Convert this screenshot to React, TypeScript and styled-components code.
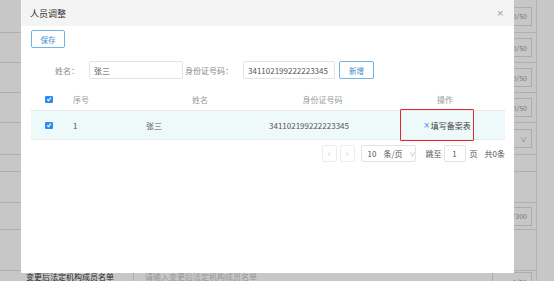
import styled, { createGlobalStyle } from 'styled-components';

const GlobalStyle = createGlobalStyle`
  html, body {
    margin: 0;
    padding: 0;
    background: #ffffff;
    font-family: 'Noto Sans CJK SC', 'Noto Sans', sans-serif;
    overflow: hidden;
  }
`;

const bgRows = [
  { h: 33, field: '0/50' },
  { h: 30, field: '0/50' },
  { h: 30, field: '0/50' },
  { h: 30, field: '0/50' },
  { h: 32, field: 'select' },
  { h: 17, field: '' },
  { h: 31, field: '' },
  { h: 27, field: '/300' },
  { h: 41, field: '' },
];

function Check() {
  return (
    <CheckBox>
      <svg width="6" height="6" viewBox="0 0 6 6">
        <path d="M1.2 3.4 L2.5 4.6 L4.8 1.6" fill="none" stroke="#fff" strokeWidth="1.1" />
      </svg>
    </CheckBox>
  );
}

export default function App() {
  return (
    <>
      <GlobalStyle />
      <Page>
        <BgForm>
          {bgRows.map((r, i) => (
            <BgRow key={i} $h={r.h}>
              {r.field === 'select' ? (
                <BgField $w={40}>
                  <span>∨</span>
                </BgField>
              ) : r.field ? (
                <BgField $w={r.field === '/300' ? 60 : 40}>
                  <span>{r.field}</span>
                </BgField>
              ) : null}
            </BgRow>
          ))}
          <BgLastRow>
            <BgLabel>变更后法定机构成员名单</BgLabel>
            <BgInput>请输入变更后法定机构成员名单</BgInput>
            <BgField $w={40}>
              <span>0/50</span>
            </BgField>
          </BgLastRow>
        </BgForm>
        <Mask />
        <Modal>
          <ModalHeader>
            <Title>人员调整</Title>
            <Close>×</Close>
          </ModalHeader>
          <ModalBody>
            <GhostButton $w={34}>保存</GhostButton>
            <SearchRow>
              <Label $w={58}>姓名：</Label>
              <TextInput $w={94}>张三</TextInput>
              <Label $w={60}>身份证号码：</Label>
              <TextInput $w={92}>341102199222223345</TextInput>
              <GhostButton $w={35}>新增</GhostButton>
            </SearchRow>
            <Table>
              <HeadRow>
                <Cell>
                  <Check />
                </Cell>
                <Cell $left>序号</Cell>
                <Cell>姓名</Cell>
                <Cell>身份证号码</Cell>
                <Cell>操作</Cell>
              </HeadRow>
              <BodyRow>
                <Cell>
                  <Check />
                </Cell>
                <Cell $left>1</Cell>
                <Cell>张三</Cell>
                <Cell>341102199222223345</Cell>
                <Cell>
                  <ActionLink>
                    <b>×</b>填写备案表
                  </ActionLink>
                  <Highlight />
                </Cell>
                <Cell />
              </BodyRow>
            </Table>
            <Pager>
              <PageBtn>‹</PageBtn>
              <PageBtn>›</PageBtn>
              <SizeSelect>
                <span>10</span>
                <span>条/页</span>
                <Chevron>∨</Chevron>
              </SizeSelect>
              <PagerText>跳至</PagerText>
              <JumpInput>1</JumpInput>
              <PagerText>页</PagerText>
              <PagerText>共0条</PagerText>
            </Pager>
          </ModalBody>
        </Modal>
      </Page>
    </>
  );
}

const Page = styled.div`
  position: relative;
  width: 554px;
  height: 281px;
  overflow: hidden;
  background: #ffffff;
`;

const BgForm = styled.div`
  width: 536px;
  display: flex;
  flex-direction: column;
  border-right: 1px solid #e4e4e4;
`;

const BgRow = styled.div<{ $h: number }>`
  height: ${(p) => p.$h}px;
  border-bottom: 1px solid #e2e2e2;
  box-sizing: border-box;
  display: flex;
  align-items: center;
  justify-content: flex-end;
  padding-right: 4px;
`;

const BgLastRow = styled.div`
  height: 30px;
  display: flex;
  align-items: flex-start;
  padding-top: 1px;
  padding-right: 4px;
  box-sizing: border-box;
`;

const BgLabel = styled.div`
  width: 134px;
  padding-left: 26px;
  box-sizing: border-box;
  font-size: 8px;
  color: #333;
  border-right: 1px solid #dcdcdc;
  line-height: 10px;
  white-space: nowrap;
`;

const BgInput = styled.div`
  flex: 1;
  padding-left: 11px;
  font-size: 8px;
  color: #c4c4c4;
  line-height: 10px;
`;

const BgField = styled.div<{ $w: number }>`
  width: ${(p) => p.$w}px;
  height: 19px;
  border: 1px solid #dddddd;
  box-sizing: border-box;
  display: flex;
  align-items: center;
  justify-content: flex-end;
  padding-right: 4px;
  font-size: 7px;
  color: #999;
`;

const Mask = styled.div`
  position: absolute;
  inset: 0;
  background: rgba(0, 0, 0, 0.22);
`;

const Modal = styled.div`
  position: absolute;
  left: 21px;
  top: 0;
  width: 493px;
  height: 273px;
  background: #ffffff;
  display: flex;
  flex-direction: column;
`;

const ModalHeader = styled.div`
  height: 26px;
  background: #f4f4f4;
  display: flex;
  align-items: center;
  justify-content: space-between;
  padding: 0 10px 0 9px;
`;

const Title = styled.div`
  font-size: 9px;
  color: #333;
`;

const Close = styled.div`
  font-size: 9px;
  color: #999;
  font-family: 'DejaVu Sans', sans-serif;
`;

const ModalBody = styled.div`
  display: flex;
  flex-direction: column;
  align-items: flex-start;
  padding: 4px 9px 0 10px;
`;

const GhostButton = styled.div<{ $w: number }>`
  width: ${(p) => p.$w}px;
  height: 18px;
  border: 1px solid #6fb3e0;
  border-radius: 2px;
  box-sizing: border-box;
  display: flex;
  align-items: center;
  justify-content: center;
  font-size: 7.5px;
  color: #3c8dcc;
`;

const SearchRow = styled.div`
  margin-top: 13px;
  display: flex;
  align-items: center;

  ${GhostButton} {
    margin-left: 4px;
  }
`;

const Label = styled.div<{ $w: number }>`
  width: ${(p) => p.$w}px;
  text-align: right;
  padding-right: 10px;
  box-sizing: border-box;
  font-size: 8px;
  color: #888;
  white-space: nowrap;
`;

const TextInput = styled.div<{ $w: number }>`
  width: ${(p) => p.$w}px;
  height: 18px;
  border: 1px solid #e3e3e3;
  border-radius: 2px;
  box-sizing: border-box;
  display: flex;
  align-items: center;
  padding-left: 4px;
  font-size: 8px;
  color: #555;
  white-space: nowrap;
`;

const Table = styled.div`
  margin-top: 9px;
  width: 474px;
  display: flex;
  flex-direction: column;
`;

const HeadRow = styled.div`
  height: 22px;
  display: grid;
  grid-template-columns: 36px 73px 120px 125px 120px;
  align-items: center;
  border-bottom: 1px solid #e8eaec;
  font-size: 8px;
  color: #999;
`;

const BodyRow = styled.div`
  height: 28px;
  display: grid;
  grid-template-columns: 36px 41px 92px 218px 58px 29px;
  align-items: center;
  background: #eef9f9;
  border-bottom: 1px solid #e8eaec;
  font-size: 8px;
  color: #555;
`;

const Cell = styled.div<{ $left?: boolean }>`
  position: relative;
  display: flex;
  align-items: center;
  justify-content: ${(p) => (p.$left ? 'flex-start' : 'center')};
  padding-left: ${(p) => (p.$left ? '6px' : '0')};
  white-space: nowrap;
`;

const CheckBox = styled.div`
  width: 8px;
  height: 7px;
  background: #2d8cf0;
  border-radius: 1px;
  display: flex;
  align-items: center;
  justify-content: center;
`;

const ActionLink = styled.span`
  color: #444;
  display: flex;
  align-items: center;

  b {
    font-weight: normal;
    color: #2d8cf0;
    margin-right: 1px;
    font-family: 'DejaVu Sans', sans-serif;
  }
`;

const Highlight = styled.div`
  position: absolute;
  left: -18px;
  top: -11px;
  width: 74px;
  height: 32px;
  border: 1.5px solid #e3262b;
  box-sizing: border-box;
  border-radius: 1px;
`;

const Pager = styled.div`
  margin-top: 5px;
  width: 474px;
  display: flex;
  justify-content: flex-end;
  align-items: center;
  font-size: 8px;
  color: #555;
  white-space: nowrap;
`;

const PageBtn = styled.div`
  width: 15px;
  height: 17px;
  border: 1px solid #ececec;
  border-radius: 2px;
  box-sizing: border-box;
  display: flex;
  align-items: center;
  justify-content: center;
  color: #ccc;
  font-size: 9px;
  margin-right: 3px;

  & + & {
    margin-right: 6px;
  }
`;

const SizeSelect = styled.div`
  width: 55px;
  height: 17px;
  border: 1px solid #e3e3e3;
  border-radius: 2px;
  box-sizing: border-box;
  display: flex;
  align-items: center;
  padding: 0 4px 0 6px;
  gap: 7px;
  margin-right: 10px;
  white-space: nowrap;
`;

const Chevron = styled.span`
  color: #aaa;
  font-size: 6px;
  margin-left: auto;
`;

const PagerText = styled.span`
  margin-right: 2px;
  &:last-child {
    margin-left: 5px;
    margin-right: 0;
  }
`;

const JumpInput = styled.div`
  width: 22px;
  height: 17px;
  border: 1px solid #e3e3e3;
  border-radius: 2px;
  box-sizing: border-box;
  display: flex;
  align-items: center;
  justify-content: center;
  margin-right: 4px;
`;
